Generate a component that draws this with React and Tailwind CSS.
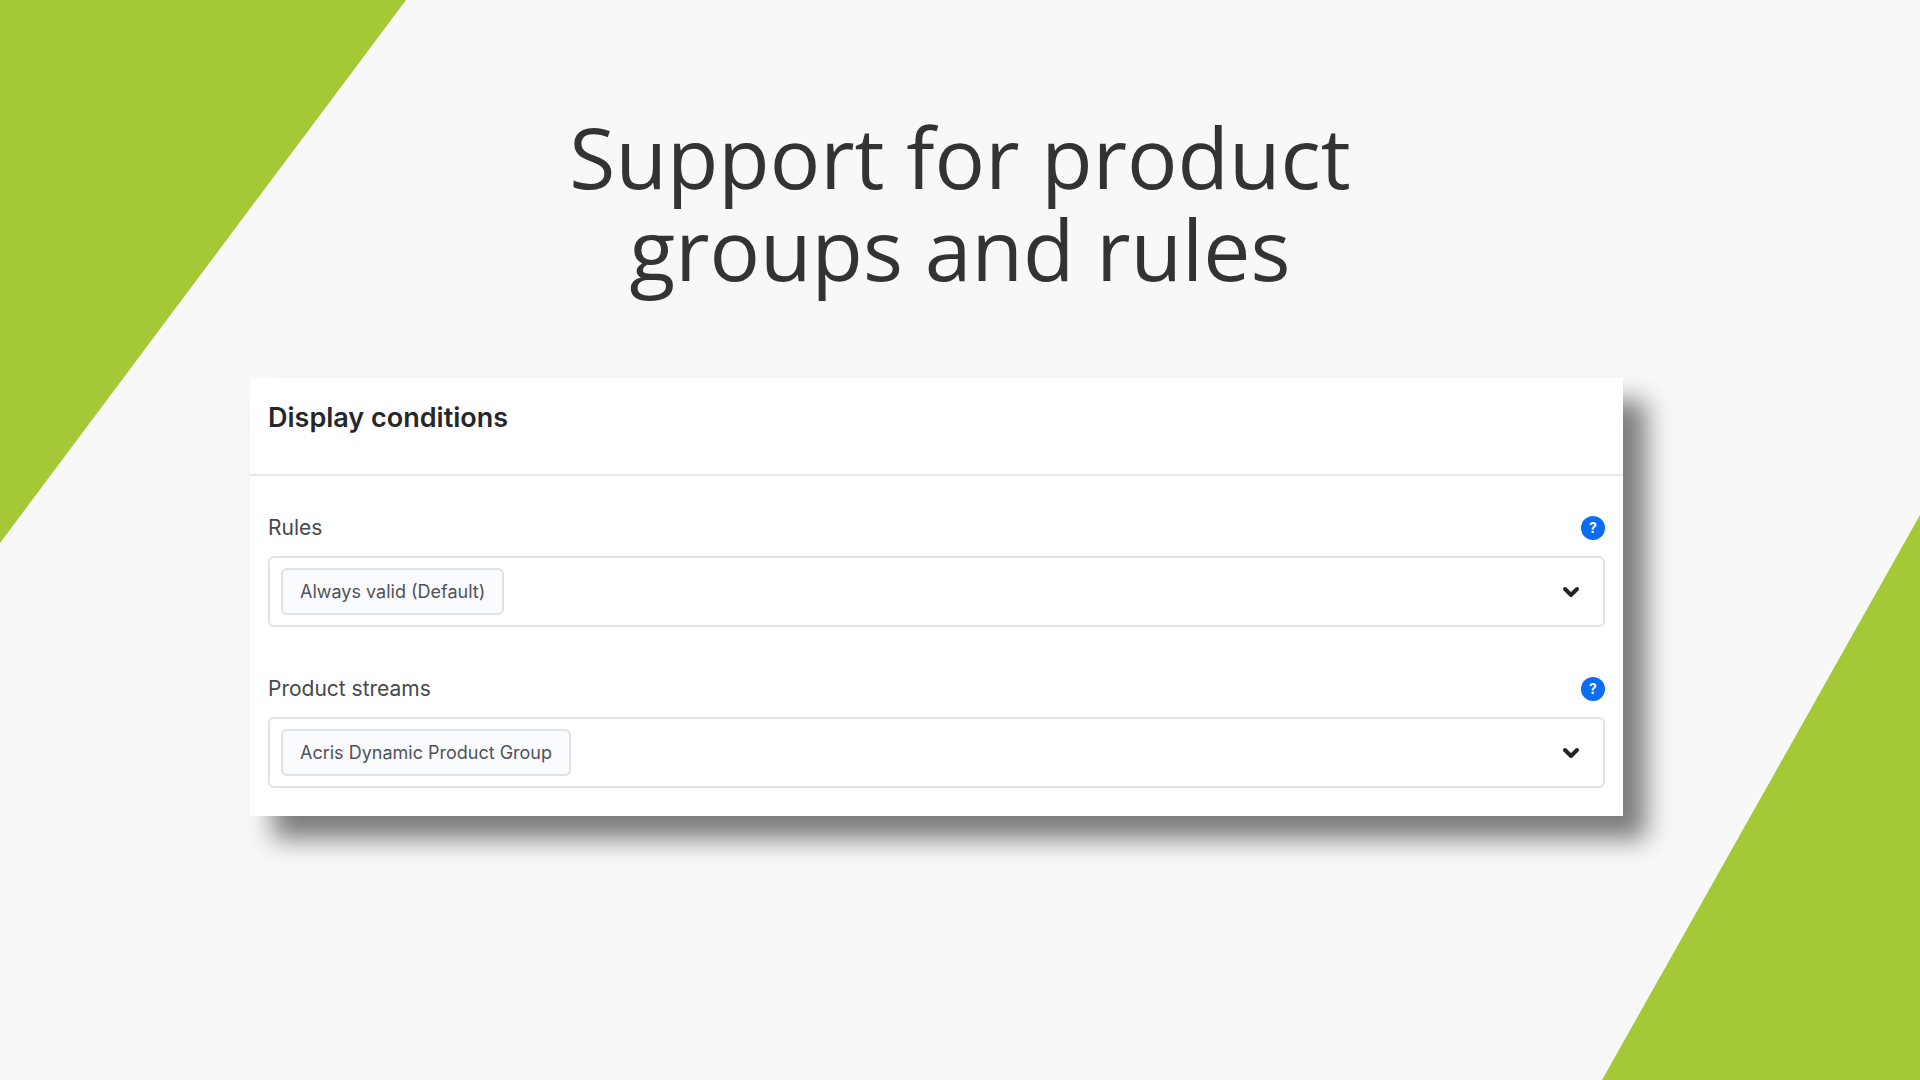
import { useRef } from "react"
import { ChevronDown } from "lucide-react"

function ConditionField({ id, label, options }) {
  const selectRef = useRef(null)

  return (
    <div>
      <div className="flex h-6 items-center justify-between">
        <label htmlFor={id} className="text-[21px] leading-6 text-[#46484d]">
          {label}
        </label>
        <button
          type="button"
          aria-label={`Help: ${label}`}
          className="flex h-6 w-6 items-center justify-center rounded-full bg-[#0b6cf5] text-sm font-bold text-white"
        >
          ?
        </button>
      </div>

      <div className="mt-4 flex h-[71px] items-center justify-between rounded-md border-2 border-[#e1e2e4] pr-5 pl-[11px]">
        <select
          ref={selectRef}
          id={id}
          className="h-[47px] appearance-none rounded-md border-2 border-[#dfe1e5] bg-[#fafbfe] px-[17px] text-lg text-[#505257] [field-sizing:content]"
        >
          {options.map((option) => (
            <option key={option}>{option}</option>
          ))}
        </select>
        <button
          type="button"
          aria-label={`Open ${label}`}
          onClick={() => selectRef.current?.showPicker()}
        >
          <ChevronDown className="h-6 w-6 text-[#222428]" strokeWidth={4} />
        </button>
      </div>
    </div>
  )
}

export default function App() {
  return (
    <main className="relative min-h-screen overflow-hidden bg-[#f8f8f8] pt-[111px] font-['Inter',sans-serif]">
      {/* Corner shapes */}
      <div className="absolute top-0 left-0 h-[543px] w-[406px] bg-[#a5c836] [clip-path:polygon(0_0,100%_0,0_100%)]" />
      <div className="absolute right-0 bottom-0 h-[565px] w-[318px] bg-[#a5c836] [clip-path:polygon(100%_0,100%_100%,0_100%)]" />

      <h1 className="text-center font-['Open_Sans',sans-serif] text-[84px] leading-[92px] text-[#333333]">
        Support for product
        <br />
        groups and rules
      </h1>

      <section className="relative mt-[83px] mr-[297px] ml-[250px] bg-white shadow-[23px_23px_24px_rgba(0,0,0,0.5)]">
        <header className="border-b-2 border-[#e6e7e9] px-[18px] pt-6 pb-10">
          <h2 className="text-[27px] leading-8 font-semibold text-[#26272b]">
            Display conditions
          </h2>
        </header>

        <div className="flex flex-col gap-[50px] px-[18px] pt-10 pb-7">
          <ConditionField
            id="rules"
            label="Rules"
            options={["Always valid (Default)"]}
          />
          <ConditionField
            id="product-streams"
            label="Product streams"
            options={["Acris Dynamic Product Group"]}
          />
        </div>
      </section>
    </main>
  )
}
